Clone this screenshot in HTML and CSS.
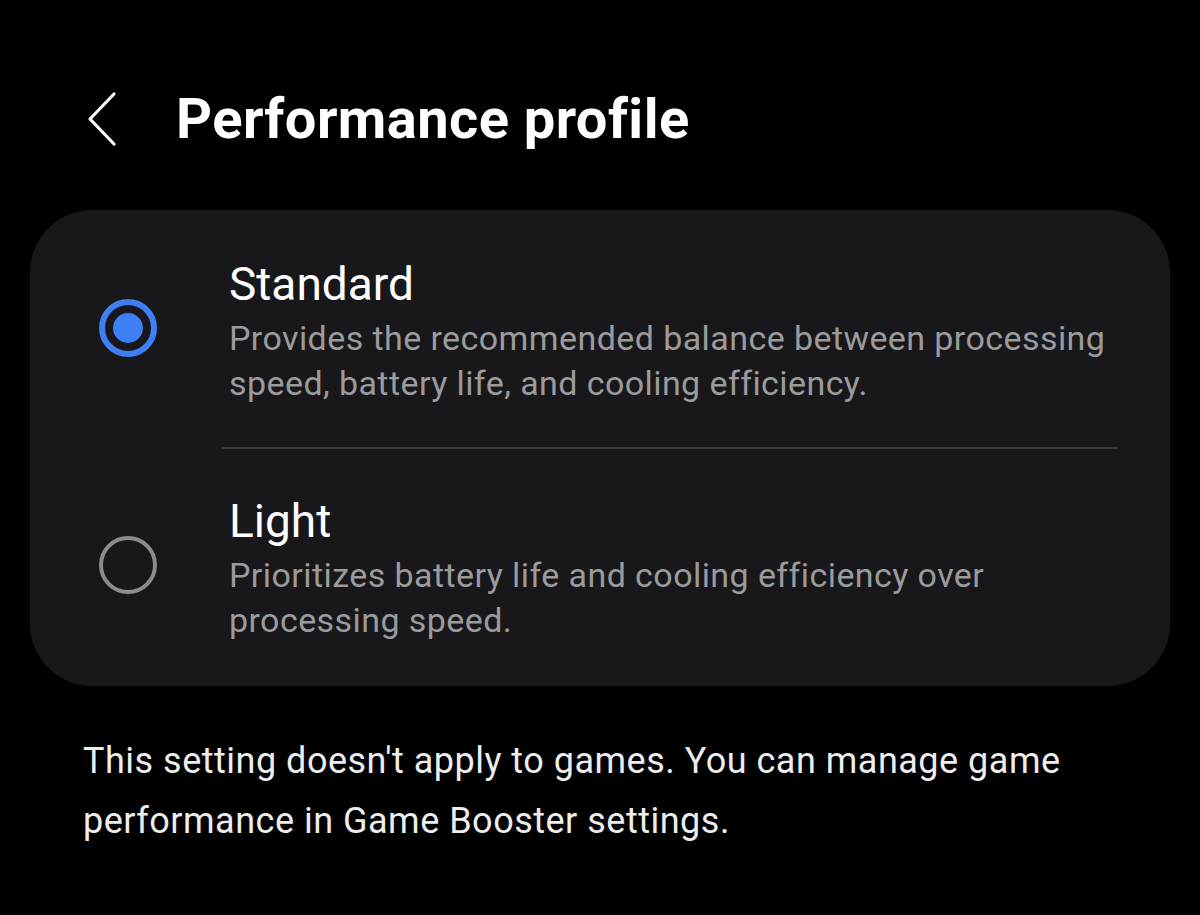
FILE: index.html
```html
<!DOCTYPE html>
<html lang="en">
<head>
<meta charset="utf-8">
<title>Performance profile</title>
<link rel="stylesheet" href="styles.css">
</head>
<body>
<div class="screen">
  <header class="topbar">
    <button class="back" aria-label="Back">
      <svg width="32" height="56" viewBox="0 0 32 56"><path d="M28 3 L4 28 L28 53" fill="none" stroke="#fff" stroke-width="3.2" stroke-linecap="round" stroke-linejoin="round"/></svg>
    </button>
    <h1 class="title">Performance profile</h1>
  </header>

  <section class="card">
    <div class="option">
      <div class="radio-cell"><span class="radio checked"></span></div>
      <div class="text">
        <div class="opt-title">Standard</div>
        <div class="opt-desc">Provides the recommended balance between processing speed, battery life, and cooling efficiency.</div>
      </div>
    </div>
    <div class="divider"></div>
    <div class="option">
      <div class="radio-cell"><span class="radio"></span></div>
      <div class="text">
        <div class="opt-title">Light</div>
        <div class="opt-desc">Prioritizes battery life and cooling efficiency over processing speed.</div>
      </div>
    </div>
  </section>

  <p class="note">This setting doesn't apply to games. You can manage game performance in Game Booster settings.</p>
</div>
</body>
</html>
```

FILE: styles.css
```css
html, body {
  margin: 0;
  padding: 0;
  background: #000;
}
body {
  font-family: Roboto, "Noto Sans", sans-serif;
  color: #fff;
  width: 1200px;
  height: 915px;
  overflow: hidden;
}
.screen {
  display: flex;
  flex-direction: column;
}
.topbar {
  display: flex;
  align-items: center;
  padding: 88px 0 0 86px;
  height: 62px;
}
.back {
  background: none;
  border: 0;
  padding: 0;
  width: 32px;
  height: 56px;
  display: flex;
  margin-right: 58px;
}
.title {
  margin: 0;
  font-size: 56px;
  font-weight: 700;
  line-height: 62px;
  letter-spacing: 0.45px;
}
.card {
  margin: 60px 30px 0;
  background: #18181a;
  border-radius: 62px;
  padding: 46px 0 43px;
}
.option {
  display: flex;
  align-items: center;
}
.radio-cell {
  width: 199px;
  flex: none;
  display: flex;
  padding-left: 69px;
  padding-bottom: 6px;
  box-sizing: border-box;
}
.radio {
  width: 58px;
  height: 58px;
  border-radius: 50%;
  box-sizing: border-box;
  border: 4px solid #8c8c8e;
  position: relative;
}
.radio.checked {
  border: 6px solid #3f7ff4;
}
.radio.checked::after {
  content: "";
  position: absolute;
  left: 8px;
  top: 8px;
  width: 30px;
  height: 30px;
  border-radius: 50%;
  background: #3f7ff4;
}
.text {
  flex: 1;
  padding-right: 50px;
}
.opt-title {
  font-size: 46px;
  line-height: 56px;
  color: #fff;
}
.opt-desc {
  font-size: 34px;
  line-height: 45px;
  letter-spacing: 0.42px;
  color: #9b9b9d;
  margin-top: 4px;
}
.divider {
  height: 2px;
  background: #39393b;
  margin: 41px 52px 44px 192px;
}
.note {
  margin: 45px 0 0 83px;
  width: 1060px;
  font-size: 36px;
  line-height: 60px;
  letter-spacing: 0.5px;
  color: #ededed;
}
```
